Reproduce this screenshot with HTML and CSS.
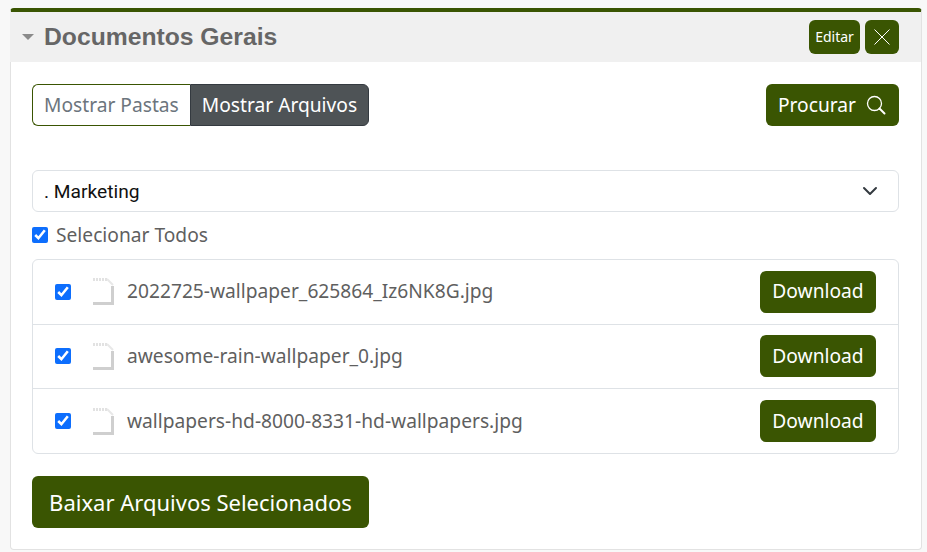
FILE: index.html
```html
<!DOCTYPE html>
<html lang="en">
<head>
  <meta charset="UTF-8">
  <title>Documentos Gerais</title>
  <link rel="stylesheet" href="styles.css">
</head>
<body>
  <div class="card">
    <div class="card-header">
      <span class="caret"></span>
      <h1>Documentos Gerais</h1>
      <div class="header-actions">
        <button class="btn btn-edit">Editar</button>
        <button class="btn btn-close" aria-label="Fechar">
          <svg width="16" height="16" viewBox="0 0 16 16" fill="none" stroke="currentColor" stroke-width="1"><path d="M.5.5l15 15M15.500.5l-15 15"/></svg>
        </button>
      </div>
    </div>

    <div class="card-body">
      <div class="toolbar">
        <div class="toggle">
          <button class="toggle-item">Mostrar Pastas</button>
          <button class="toggle-item active">Mostrar Arquivos</button>
        </div>
        <button class="btn btn-search">
          Procurar
          <svg width="21" height="20" viewBox="0 0 21 20" fill="none" stroke="currentColor"><circle cx="8.500" cy="8.500" r="7" stroke-width="1.300"/><path d="M13.500 13.500l5 5" stroke-width="2" stroke-linecap="round"/></svg>
        </button>
      </div>

      <div class="select">
        <span>. Marketing</span>
        <svg width="16" height="16" viewBox="0 0 16 16" fill="none" stroke="#343a40" stroke-width="2" stroke-linecap="round" stroke-linejoin="round"><path d="M2 5l6 6 6-6"/></svg>
      </div>

      <label class="check-all">
        <input type="checkbox" checked>
        Selecionar Todos
      </label>

      <ul class="file-list">
        <li class="file-row">
          <input type="checkbox" checked>
          <svg class="file-icon" width="21" height="27" viewBox="0 0 21 27" fill="none"><path d="M19.500 8v17.500H0" stroke="#cfcfcf" stroke-width="3"/><path d="M0 1.500h14" stroke="#e2e2e2" stroke-width="3" stroke-dasharray="2 1"/><path d="M14 1l6 6" stroke="#e8e8e8" stroke-width="2"/></svg>
          <span class="file-name">2022725-wallpaper_625864_Iz6NK8G.jpg</span>
          <button class="btn btn-download">Download</button>
        </li>
        <li class="file-row">
          <input type="checkbox" checked>
          <svg class="file-icon" width="21" height="27" viewBox="0 0 21 27" fill="none"><path d="M19.500 8v17.500H0" stroke="#cfcfcf" stroke-width="3"/><path d="M0 1.500h14" stroke="#e2e2e2" stroke-width="3" stroke-dasharray="2 1"/><path d="M14 1l6 6" stroke="#e8e8e8" stroke-width="2"/></svg>
          <span class="file-name">awesome-rain-wallpaper_0.jpg</span>
          <button class="btn btn-download">Download</button>
        </li>
        <li class="file-row">
          <input type="checkbox" checked>
          <svg class="file-icon" width="21" height="27" viewBox="0 0 21 27" fill="none"><path d="M19.500 8v17.500H0" stroke="#cfcfcf" stroke-width="3"/><path d="M0 1.500h14" stroke="#e2e2e2" stroke-width="3" stroke-dasharray="2 1"/><path d="M14 1l6 6" stroke="#e8e8e8" stroke-width="2"/></svg>
          <span class="file-name">wallpapers-hd-8000-8331-hd-wallpapers.jpg</span>
          <button class="btn btn-download">Download</button>
        </li>
      </ul>

      <button class="btn btn-bulk">Baixar Arquivos Selecionados</button>
    </div>
  </div>
</body>
</html>
```

FILE: styles.css
```css
:root {
  --green: #3a5502;
  --border: #dee2e6;
  --text: #5f5f5f;
}

* {
  box-sizing: border-box;
}

body {
  font-family: 'Noto Sans', sans-serif;
  background-color: #f8f8f8;
  color: var(--text);
  margin: 0;
  padding: 8px 5px 3px 10px;
}

.card {
  background-color: white;
  border: 1px solid #e2e2e2;
  border-top: 4px solid var(--green);
  border-radius: 4px;
}

.card-header {
  display: flex;
  align-items: center;
  height: 50px;
  margin-left: -1px;
  padding: 0 22px 0 12px;
  background-color: #f0f0f0;
}

.caret {
  width: 0;
  height: 0;
  margin-right: 10px;
  border-left: 6px solid transparent;
  border-right: 6px solid transparent;
  border-top: 6px solid #8a8a8a;
}

h1 {
  margin: 0;
  font-family: 'Liberation Sans', sans-serif;
  font-size: 24.700px;
  font-weight: 700;
  color: #666;
}

.header-actions {
  display: flex;
  gap: 5px;
  margin-left: auto;
}

.btn {
  border: 0;
  border-radius: 6px;
  background-color: var(--green);
  color: white;
  font-family: 'Noto Sans', sans-serif;
}

.btn-edit {
  width: 51px;
  height: 34px;
  padding: 0 0 2px;
  font-size: 14px;
}

.btn-close {
  display: flex;
  align-items: center;
  justify-content: center;
  width: 34px;
  height: 34px;
  padding: 0;
}

.card-body {
  padding: 22px 22px 21px 21px;
}

.toolbar {
  display: flex;
  justify-content: space-between;
  margin-bottom: 44px;
}

.toggle {
  display: flex;
  height: 42px;
}

.toggle-item {
  padding: 0 11px 2px;
  border: 1px solid var(--green);
  border-radius: 6px 0 0 6px;
  border-right: 0;
  background-color: white;
  color: #6c757d;
  font-family: 'Noto Sans', sans-serif;
  font-size: 19.200px;
}

.toggle-item.active {
  border: 1px solid #343a40;
  border-radius: 0 6px 6px 0;
  background-color: #4e5356;
  color: white;
}

.btn-search {
  display: flex;
  align-items: center;
  gap: 10px;
  height: 42px;
  padding: 0 12px 2px;
  font-size: 19.200px;
}

.btn-search svg {
  margin-top: 2px;
}

.select {
  display: flex;
  align-items: center;
  justify-content: space-between;
  height: 42px;
  padding: 0 20px 0 11px;
  border: 1px solid var(--border);
  border-radius: 6px;
  color: #111;
  font-family: 'Roboto', sans-serif;
  font-size: 19.200px;
}

.check-all {
  display: flex;
  align-items: center;
  gap: 8px;
  height: 47px;
  padding-bottom: 2px;
  font-size: 19.200px;
}

input[type="checkbox"] {
  width: 16px;
  height: 16px;
  margin: 0;
  accent-color: #0d6efd;
}

.file-list {
  margin: 0 0 22px;
  padding: 0;
  list-style: none;
  border: 1px solid var(--border);
  border-radius: 6px;
}

.file-row {
  display: flex;
  align-items: center;
  height: 64.500px;
  padding: 0 22px;
  border-bottom: 1px solid var(--border);
}

.file-row:last-child {
  height: 64px;
  border-bottom: 0;
}

.file-icon {
  margin: 0 13px 0 22px;
}

.file-name {
  font-size: 19.200px;
  padding-bottom: 2px;
}

.btn-download {
  height: 42px;
  width: 116px;
  margin-left: auto;
  padding: 0 0 2px;
  font-size: 19.200px;
}

.btn-bulk {
  display: block;
  height: 52px;
  width: 337px;
  padding: 0;
  font-size: 22px;
}
```
